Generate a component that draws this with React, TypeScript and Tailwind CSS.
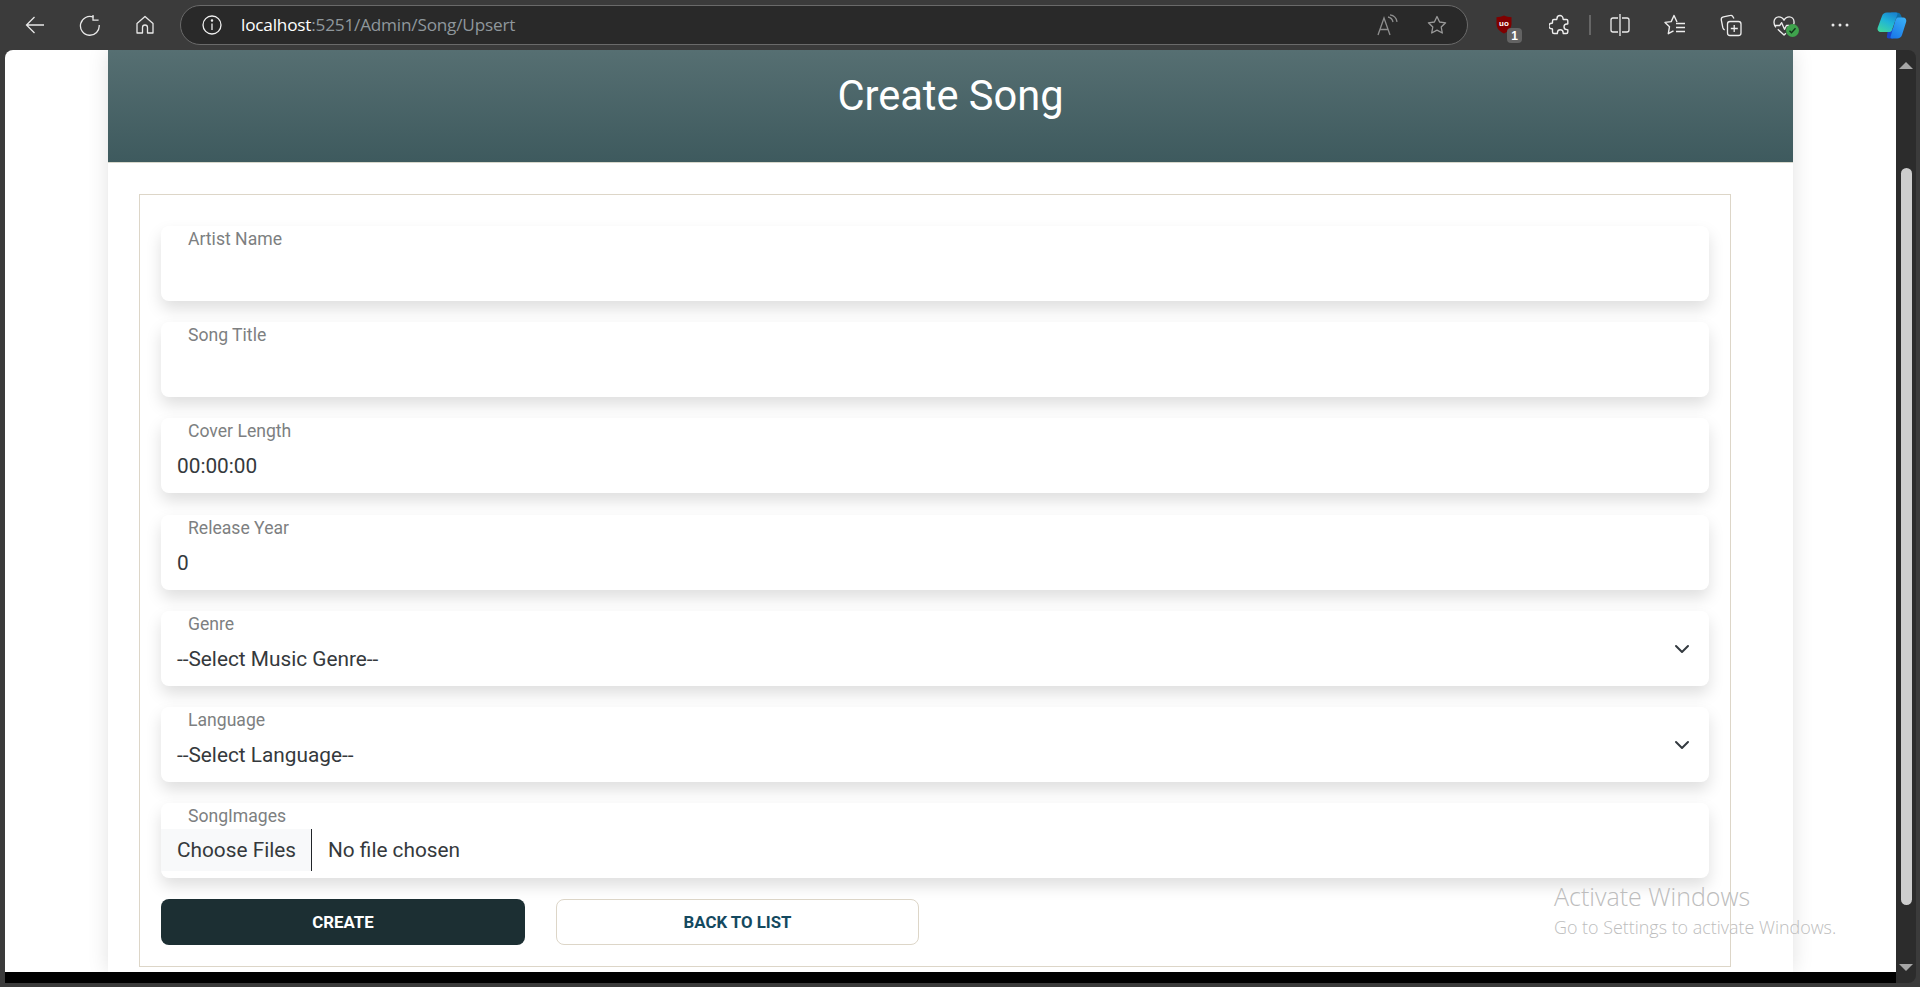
import React from 'react';

const BackIcon = () => (
  <svg width="20" height="20" viewBox="0 0 20 20" fill="none" stroke="#e8e8e8" strokeWidth="1.3">
    <path d="M19 10H2M9.5 2 1.5 10l8 8" />
  </svg>
);

const ReloadIcon = () => (
  <svg width="22" height="22" viewBox="0 0 22 22" fill="none" stroke="#e8e8e8" strokeWidth="1.3">
    <path d="M14.5 3.2A9.4 9.4 0 1 0 20.2 11" />
    <path d="M14 1v5.2h5.6" />
  </svg>
);

const HomeIcon = () => (
  <svg width="20" height="20" viewBox="0 0 20 20" fill="none" stroke="#e8e8e8" strokeWidth="1.3" strokeLinejoin="round">
    <path d="M10 1.5 2 8.5v9.5h5.5v-5.5a2.5 2.5 0 0 1 5 0V18H18V8.500z" />
  </svg>
);

const InfoIcon = () => (
  <svg width="20" height="20" viewBox="0 0 20 20" fill="none" stroke="#f0f0f0" strokeWidth="1.3">
    <circle cx="10" cy="10" r="9" />
    <path d="M10 8.500V15" />
    <circle cx="10" cy="5.600" r="0.6" fill="#f0f0f0" />
  </svg>
);

const ReadAloudIcon = () => (
  <svg width="22" height="22" viewBox="0 0 22 22" fill="none" stroke="#8e8e8e" strokeWidth="1.3">
    <path d="M2 21 8 4l6 17M4 15.500h8" />
    <path d="M12 3c3 .5 4.500 2.500 5 5M14 .8c4 .6 6.500 3.200 7 7" />
  </svg>
);

const StarIcon = () => (
  <svg width="20" height="20" viewBox="0 0 20 20" fill="none" stroke="#9a9a9a" strokeWidth="1.3" strokeLinejoin="round">
    <path d="m10 1.500 2.600 5.500 6 .8-4.400 4.200 1.100 6L10 15.100 4.700 18l1.100-6L1.400 7.800l6-.8z" />
  </svg>
);

const UBlockIcon = () => (
  <div className="relative w-[36px] h-[36px]">
    <svg className="absolute left-[10px] top-[8px]" width="16" height="19" viewBox="0 0 16 19">
      <path d="M8 .5c2.500 1.200 5 1.700 7.500 1.700V9c0 4.500-3.200 7.500-7.500 9.500C3.700 16.500.5 13.500.5 9V2.200C3 2.200 5.500 1.700 8 .5z" fill="#800000" />
      <text x="8" y="10.500" textAnchor="middle" fill="#ffffff" fontSize="8" fontWeight="700" fontFamily="Liberation Sans, sans-serif">uo</text>
    </svg>
    <div className="absolute left-[21px] top-[21px] w-[15px] h-[15px] rounded-[4px] bg-[#636363] flex items-center justify-center text-[12px] leading-none font-bold text-white font-['Liberation_Sans',sans-serif]">
      1
    </div>
  </div>
);

const PuzzleIcon = () => (
  <svg width="22" height="22" viewBox="0 0 22 22" fill="none" stroke="#ededed" strokeWidth="1.4" strokeLinejoin="round">
    <path d="M8 4.500a3 3 0 0 1 6 0c0 .5 0 .8.300 1h3.200c.8 0 1.300.6 1.300 1.300v3c-.3.200-.6.200-1 .2a2.800 2.800 0 0 0 0 5.600c.4 0 .7 0 1 .2v2.200c0 1-.6 1.500-1.500 1.500h-3c-.2-.3-.2-.6-.2-1a2.800 2.800 0 0 0-5.600 0c0 .4 0 .7-.2 1H5c-1 0-1.500-.6-1.500-1.500v-2.700c0-.3-.3-.5-.8-.5a2.800 2.800 0 0 1 0-5.600c.5 0 .8-.2.800-.5V7c0-.9.500-1.500 1.400-1.500h2.800c.2-.2.300-.500.300-1z" />
  </svg>
);

const SplitIcon = () => (
  <svg width="20" height="24" viewBox="0 0 20 24" fill="none" stroke="#ededed" strokeWidth="1.3">
    <path d="M8 5H3a2 2 0 0 0-2 2v10a2 2 0 0 0 2 2h5M12 5h5a2 2 0 0 1 2 2v10a2 2 0 0 1-2 2h-5M10 1v22" />
  </svg>
);

const FavoritesIcon = () => (
  <svg width="22" height="22" viewBox="0 0 22 22" fill="none" stroke="#ededed" strokeWidth="1.4" strokeLinejoin="round">
    <path d="M13 8 10 1.500 7.200 7.600 1 8.400l4.500 4.300-1.200 7 5.200-2.800" />
    <path d="M12 9.500h9M12 13.500h9M12 17.500h9" />
  </svg>
);

const CollectionsIcon = () => (
  <svg width="22" height="24" viewBox="0 0 22 24" fill="none" stroke="#ededed" strokeWidth="1.3" strokeLinejoin="round">
    <path d="M14 5.500 12.500 3.200c-.5-.8-1.200-1-2-.8L3.500 3.800C1.800 4.200 1 5.300 1.300 7l1.500 7.500c.3 1.300.9 2 1.900 2.500" />
    <rect x="7.500" y="8.500" width="13.500" height="14" rx="2.500" />
    <path d="M14.200 12v7M10.800 15.500h7" />
  </svg>
);

const HealthIcon = () => (
  <div className="relative w-[26px] h-[26px]">
    <svg className="absolute left-0 top-[3px]" width="23" height="22" viewBox="0 0 24 23" fill="none" stroke="#ededed" strokeWidth="1.4" strokeLinejoin="round">
      <path d="M3 13c-1.500-2-2-3.500-2-5.500C1 4 3.500 2 6 2c2.500 0 4.500 1.500 5.500 3.500C12.500 3.500 14.500 2 17 2c2.500 0 5 2 5 5.500 0 .8-.1 1.500-.4 2.300" />
      <path d="M1.500 11H7l2-3 3 7 2-4h3M5 15l6.500 6 2-2" />
    </svg>
    <div className="absolute left-[13px] top-[12px] w-[13px] h-[13px] rounded-full bg-[#3fa34d] flex items-center justify-center">
      <svg width="9" height="9" viewBox="0 0 9 9" fill="none" stroke="#10331a" strokeWidth="1.400">
        <path d="m1.500 4.800 2 2 4-4.500" />
      </svg>
    </div>
  </div>
);

const DotsIcon = () => (
  <svg width="18" height="4" viewBox="0 0 18 4" fill="#e8e8e8">
    <circle cx="2" cy="2" r="1.500" />
    <circle cx="9" cy="2" r="1.500" />
    <circle cx="16" cy="2" r="1.500" />
  </svg>
);

const CopilotIcon = () => (
  <svg width="30" height="27" viewBox="0 0 30 27">
    <defs>
      <linearGradient id="copA" x1="0.2" y1="1" x2="0.7" y2="0">
        <stop offset="0" stopColor="#3fd6a0" />
        <stop offset="0.55" stopColor="#1fb4d8" />
        <stop offset="1" stopColor="#1a86d0" />
      </linearGradient>
      <linearGradient id="copB" x1="0.8" y1="0" x2="0.2" y2="1">
        <stop offset="0" stopColor="#38aef5" />
        <stop offset="1" stopColor="#1a78ea" />
      </linearGradient>
    </defs>
    <path d="M11 17h8l-2 8c-.4 1-1 1.500-2 1.500h-3c-2 0-2.500-1-2-2.500z" fill="#1a44c8" />
    <path d="M14 .5h5.500c2.500 0 4 1 4.800 3.500l.7 2-7 0z" fill="#0f6fa8" />
    <path d="M10 .5h9c1.200 0 1.800 1 1.400 2L15 18c-.5 1.500-1.500 2-3 2H4c-2.500 0-4-2-3.300-4.300L5 4c.7-2.300 2.500-3.500 5-3.500z" fill="url(#copA)" />
    <path d="M21 5.500h5c2.500 0 3.800 2 3.200 4.300L25 23c-.7 2.300-2.500 3.500-5 3.500h-5c-1.200 0-1.800-1-1.400-2L18.500 8c.5-1.500 1.200-2.500 2.500-2.500z" fill="url(#copB)" />
  </svg>
);

// one toolbar icon with a fixed-width hit area
const Slot: React.FC<{ w: string; children: React.ReactNode }> = ({ w, children }) => (
  <div className={`${w} h-full flex items-center justify-center shrink-0`}>{children}</div>
);

const FieldCard: React.FC<{ label: string; children?: React.ReactNode; chevron?: boolean }> = ({ label, children, chevron }) => (
  <div className="relative h-[75px] rounded-[8px] bg-white shadow-[0_8px_16px_rgba(0,0,0,0.13)]">
    <div className="h-[26px] pl-[27px] pt-[1px] text-[17.600px] leading-[24px] text-[#7d7f81]">{label}</div>
    {children}
    {chevron && (
      <svg className="absolute right-[19px] top-[30px]" width="16" height="16" viewBox="0 0 16 16" fill="none" stroke="#343a40" strokeWidth="2" strokeLinecap="round" strokeLinejoin="round">
        <path d="m2 5 6 6 6-6" />
      </svg>
    )}
  </div>
);

const FieldValue: React.FC<{ children: React.ReactNode }> = ({ children }) => (
  <div className="pl-[16px] pt-[8px] text-[20.800px] leading-[28px] text-[#35393c]">{children}</div>
);

export default function App() {
  return (
    <div className="w-screen h-screen bg-[#3b3b3b] flex flex-col overflow-hidden font-['Roboto',sans-serif]">
      {/* browser toolbar */}
      <div className="h-[50px] shrink-0 flex items-center pl-[7px]">
        <Slot w="w-[55px]"><BackIcon /></Slot>
        <Slot w="w-[55px]"><ReloadIcon /></Slot>
        <Slot w="w-[55px]"><HomeIcon /></Slot>
        <div className="ml-[8px] w-[1288px] h-[40px] rounded-full border border-[#6a6a6a] bg-[#292929] flex items-center pl-[21px] pr-[20px] shrink-0">
          <InfoIcon />
          <div className="ml-[19px] text-[17.200px] leading-none tracking-[-0.2px] text-[#8f979c] font-['Open_Sans',sans-serif]">
            <span className="text-white">localhost</span>:5251/Admin/Song/Upsert
          </div>
          <div className="ml-auto flex items-center gap-[29px]">
            <ReadAloudIcon />
            <StarIcon />
          </div>
        </div>
        <div className="ml-[8px] flex items-center h-full">
          <Slot w="w-[56px]"><UBlockIcon /></Slot>
          <Slot w="w-[56px]"><PuzzleIcon /></Slot>
          <div className="w-[2px] h-[20px] bg-[#666666] ml-[1px] mr-[1px]" />
          <Slot w="w-[55px]"><SplitIcon /></Slot>
          <Slot w="w-[56px]"><FavoritesIcon /></Slot>
          <Slot w="w-[56px]"><CollectionsIcon /></Slot>
          <Slot w="w-[54px]"><HealthIcon /></Slot>
          <Slot w="w-[54px]"><DotsIcon /></Slot>
          <Slot w="w-[50px]"><CopilotIcon /></Slot>
        </div>
      </div>

      <div className="flex-1 min-h-0 flex pl-[5px] pr-[4px] pb-[4px]">
        <div className="w-[1891px] flex flex-col">
          {/* page */}
          <div className="relative flex-1 min-h-0 bg-white rounded-tl-[8px] pl-[103px] overflow-hidden">
            <div className="w-[1685px] h-full bg-white shadow-[0_0_20px_rgba(0,0,0,0.12)]">
              <div className="h-[113px] border-b border-[#d8d8cc] bg-gradient-to-b from-[#566f72] to-[#3e5a5e] flex items-center justify-center">
                <h1 className="text-[41.600px] leading-[48px] font-normal text-white pb-[20px]">Create Song</h1>
              </div>

              <div className="ml-[31px] mt-[31px] w-[1592px] h-[773px] border border-[#ddd6c8] px-[21px] pt-[31px] flex flex-col gap-[21.200px]">
                <FieldCard label="Artist Name" />
                <FieldCard label="Song Title" />
                <FieldCard label="Cover Length">
                  <FieldValue>00:00:00</FieldValue>
                </FieldCard>
                <FieldCard label="Release Year">
                  <FieldValue>0</FieldValue>
                </FieldCard>
                <FieldCard label="Genre" chevron>
                  <FieldValue>--Select Music Genre--</FieldValue>
                </FieldCard>
                <FieldCard label="Language" chevron>
                  <FieldValue>--Select Language--</FieldValue>
                </FieldCard>
                <FieldCard label="SongImages">
                  <div className="flex items-center h-[42px] text-[20.800px] text-[#35393c]">
                    <div className="w-[151px] h-full pl-[16px] bg-[#f8f9fa] border-r border-[#212529] flex items-center">Choose Files</div>
                    <div className="pl-[16px]">No file chosen</div>
                  </div>
                </FieldCard>
                <div className="flex gap-[31px]">
                  <button className="w-[364px] h-[46px] rounded-[8px] bg-[#1c2f33] text-white text-[16.800px] font-bold uppercase">Create</button>
                  <button className="w-[363px] h-[46px] rounded-[8px] bg-white border border-[#ddd6c8] text-[#14495f] text-[16.800px] font-bold uppercase">Back to List</button>
                </div>
              </div>
            </div>

            {/* windows watermark */}
            <div className="absolute left-[1549px] top-[830px] text-[#bdbdbd] font-['Open_Sans',sans-serif] font-light pointer-events-none">
              <div className="text-[25px] leading-[32px]">Activate Windows</div>
              <div className="text-[17.900px] leading-[24px] mt-[3px]">Go to Settings to activate Windows.</div>
            </div>
          </div>
          <div className="h-[11px] bg-black shrink-0" />
        </div>

        {/* scrollbar */}
        <div className="w-[20px] bg-[#2c2c2c] rounded-tr-[8px] rounded-br-[8px] flex flex-col items-center py-[12px]">
          <div className="w-0 h-0 border-x-[7px] border-x-transparent border-b-[7px] border-b-[#a6a6a6]" />
          <div className="mt-[99px] w-[11px] flex-1 rounded-full bg-[#cdcdcd] mb-[59px]" />
          <div className="w-0 h-0 border-x-[7px] border-x-transparent border-t-[7px] border-t-[#a6a6a6]" />
        </div>
      </div>
    </div>
  );
}
